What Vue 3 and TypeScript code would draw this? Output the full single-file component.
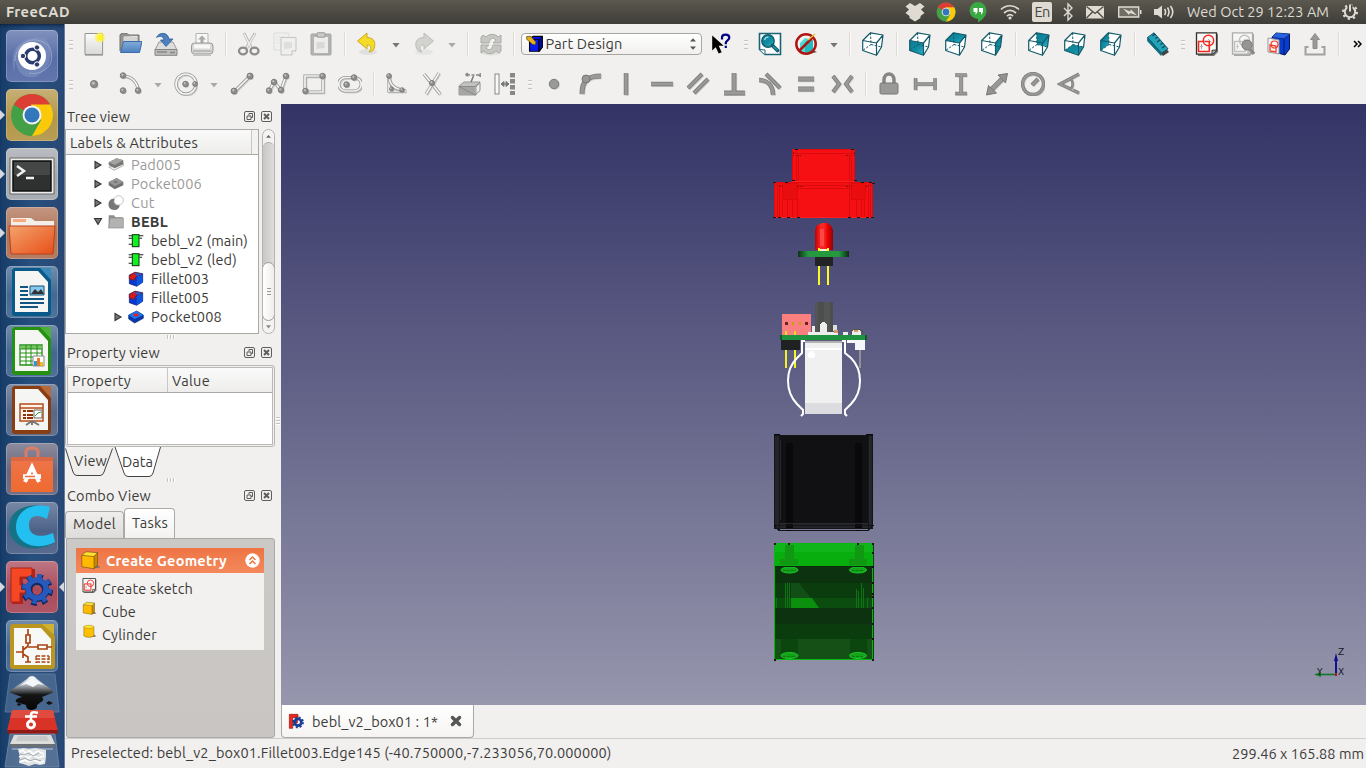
<script setup lang="ts">
interface Item { kind: 'icon' | 'sep' | 'grip' | 'drop' | 'combo' | 'more'; name?: string; w: number; off?: boolean }
interface Row { label: string; icon: string; w: number; pad: number; arrow: '' | 'r' | 'd'; off?: boolean; bold?: boolean }

// Spreads the letters of a label over its given width.
const vFit = {
  mounted(el: HTMLElement, binding: { value: number }) {
    const n = (el.textContent || '').trim().length
    const natural = el.getBoundingClientRect().width
    el.style.letterSpacing = ((binding.value - natural) / n).toFixed(3) + 'px'
  },
}

const ball = (x: number, y: number, r = 2.8) =>
  `<circle cx="${x + 0.8}" cy="${y + 1}" r="${r}" fill="#b9b9b7"/><circle cx="${x}" cy="${y}" r="${r}" fill="#8d8d8b" stroke="#757573" stroke-width=".8"/><circle cx="${x - 0.7}" cy="${y - 0.8}" r="${r * 0.38}" fill="#c4c4c2"/>`
const tube = (d: string) =>
  `<path d="${d}" transform="translate(.8 1)" fill="none" stroke="#cfcfcd" stroke-width="3.2"/><path d="${d}" fill="none" stroke="#979795" stroke-width="3.2"/><path d="${d}" fill="none" stroke="#f4f4f3" stroke-width="1.7"/>`
const bar = (d: string, w = 4) =>
  `<path d="${d}" transform="translate(.7 .8)" fill="none" stroke="#c9c9c7" stroke-width="${w}"/><path d="${d}" fill="none" stroke="#7d7d7b" stroke-width="${w}"/><path d="${d}" fill="none" stroke="#999997" stroke-width="${w - 1.6}"/>`

const faces: Record<string, string> = {
  none: '',
  front: '1.7,8.5 15.5,11 15.5,23.3 1.7,18.5',
  top: '1.7,8.5 9.5,.8 22,3 15.5,11',
  right: '15.5,11 22,3 20.5,15 15.5,23.3',
  rear: '9.5,.8 22,3 20.5,15 10,12.5',
  bottom: '1.7,18.5 10,12.5 20.5,15 15.5,23.3',
  left: '1.7,8.5 9.5,.8 10,12.5 1.7,18.5',
}
const cube = (f: string) =>
  `<path d="M1.7 8.5L9.5.8 22 3l-1.5 12-5 8.3L1.7 18.5z" fill="#fff"/>` +
  (f === 'none' ? '' : `<polygon points="${faces[f]}" fill="url(#teal)"/>`) +
  `<path d="M1.7 8.5L9.5.8 22 3l-1.5 12-5 8.3L1.7 18.5zM1.7 8.5L15.5 11 22 3M15.5 11v12.3" fill="none" stroke="#155a68" stroke-width="1.2" stroke-linejoin="round"/><path d="M9.5.8L10 12.5 1.7 18.5M10 12.5l10.5 2.5" fill="none" stroke="#155a68" stroke-width="1" stroke-dasharray="2.4 1.4"/>`
const paper = (red: string, edge: string) =>
  `<path d="M3 2h20v18l-4 4H3z" fill="#777775"/><path d="M1.5.8h20v17.4l-4 4h-16z" fill="#fafafa" stroke="${edge}" stroke-width="1.3"/><path d="M21.5 18l-4.500.3v4" fill="#bbb" stroke="${edge}"/><path d="M3.5 9.5h10.8v10H3.5z" fill="none" stroke="${red}" stroke-width="1.6"/><circle cx="13.5" cy="8.5" r="5.2" fill="none" stroke="${red}" stroke-width="1.4"/><path d="M6.5 12v5M5.2 14.5h2.8M13 7l3.5 3.5M9.5 8.5v3" stroke="#aaa"/>`
const chrome = (c: number, r: number) => {
  const a = r * 0.866, h = r * 0.5
  return `<circle cx="${c}" cy="${c}" r="${r}" fill="#43a047"/><path d="M${c} ${c}L${c - a} ${c - h}A${r} ${r} 0 0 1 ${c + a} ${c - h}z" fill="#dc3e35"/><path d="M${c - r * 0.05} ${c - h}H${c + a}A${r} ${r} 0 0 1 ${c} ${c + r}L${c + r * 0.43} ${c + r * 0.25}z" fill="#fcc90a"/><circle cx="${c}" cy="${c}" r="${r * 0.45}" fill="#f4f4f4"/><circle cx="${c}" cy="${c}" r="${r * 0.36}" fill="#3378bd"/>`
}
const magn = '<circle cx="10" cy="9" r="6.2" fill="url(#teal)" stroke="#155a68" stroke-width="1.4"/><path d="M14.5 13.5l5 5" stroke="#155a68" stroke-width="3.8" stroke-linecap="round"/><path d="M15.2 14.2l4 4" stroke="#1b99b3" stroke-width="1.6"/><path d="M6.5 8c.5-2 2-3 4-3" stroke="#8ed7e5" fill="none" stroke-width="1.4"/>'
const yellowBox = '<path d="M14 21l9-1-3-3z" fill="#76716a"/><path d="M2 6l14 1.5v14L2 19z" fill="#ffb900"/><path d="M2 6l5-4 13 1-4 4.5z" fill="#ffe033"/><path d="M16 7.5L20 3v14l-4 4.5z" fill="#c58a00"/><path d="M2 6l5-4 13 1v14l-4 4.5L2 19zM2 6l14 1.5v14M16 7.5L20 3" fill="none" stroke="#6b5208" stroke-width=".7"/>'

const icons: Record<string, string> = {
  new: '<path d="M3 23.2h18" stroke="#aaa" stroke-width="1.3"/><path d="M3 1.5h17.6v21H3z" fill="url(#paperg)" stroke="#92928e"/><circle cx="18" cy="5.5" r="5" fill="#fff34a" opacity=".75"/><circle cx="18" cy="5.5" r="2.6" fill="#fff32a"/>',
  open: '<path d="M2 19V3l1-1.3h6L11 3h10v8" fill="#969693" stroke="#6f6f6c"/><path d="M5 4l15-.5v9H5z" fill="#eee" stroke="#888"/><path d="M6 6h13M6 8h13" stroke="#bbb"/><path d="M5.5 9.5H24L21.5 20.5H2.5z" fill="url(#blueg)" stroke="#3d6ca9"/>',
  save: '<path d="M5 10h14l4 8H1z" fill="#ddd" stroke="#999"/><path d="M1 17.5h22v5.8H1z" fill="#bcbcb9" stroke="#858582"/><path d="M3 20h10M16 20.5h5" stroke="#888" stroke-width="1.5"/><path d="M2.500 5.500C5 0 13.500-.5 15 7h4L12 14.500 6.500 8H10C9 4 6 3.500 2.500 5.500z" fill="#4d80bd" stroke="#2d5c9c" stroke-width=".8"/>',
  print: '<path d="M6 13V1.500h12V13" fill="#f7f7f6" stroke="#b3b3b1"/><path d="M12 3.500l4 4h-2.500V11h-3V7.500H8z" fill="#a9a9a6"/><rect x="1.500" y="11" width="21.500" height="11" rx="3" fill="#d8d8d5" stroke="#999996"/><path d="M4 14.500h16" stroke="#f8f8f8" stroke-width="4"/><path d="M3 19h18.500" stroke="#bababA" stroke-width="2"/><path d="M3 23.400h18" stroke="#bbb"/>',
  cut: '<path d="M7 1.200l7.500 15M18 1.200L9.500 16" stroke="#b9b9b7" stroke-width="3"/><path d="M7.200 2l7 14M17.800 2L10 15.500" stroke="#f0f0ef" stroke-width="1.400"/><ellipse cx="6" cy="19" rx="4" ry="3.300" fill="none" stroke="#8c8c89" stroke-width="2.300"/><ellipse cx="17.500" cy="19" rx="4" ry="3.300" fill="none" stroke="#8c8c89" stroke-width="2.300"/>',
  copy: '<path d="M1 1h15v17H1z" fill="#f0f0ef" stroke="#dededc"/><path d="M3 5h9M3 8h9M3 11h4" stroke="#e2e2e0"/><path d="M8 5.500h15V19l-4 4H8z" fill="#efefee" stroke="#c4c4c2"/><path d="M11 10h8v6l-8 1z" fill="#dededc"/><path d="M19 23v-4h4" fill="#fff" stroke="#bbb"/>',
  paste: '<rect x="2" y="2" width="20" height="21" rx="1" fill="#b3b3b1" stroke="#a5a5a3"/><path d="M5 5h14v16H5z" fill="#ececeb"/><path d="M7.500 10h8v6l-8 1zM8 8h6" fill="#d8d8d6"/><rect x="8" y=".7" width="8" height="4.500" rx="1" fill="#c9c9c7" stroke="#9a9a97"/>',
  undo: '<ellipse cx="12" cy="20" rx="9" ry="3" fill="#dfdfdd"/><path d="M1.500 9L11 1v4.500C18.500 5.500 20 11 18 17c-1 2-3 3-5 3 3-3 2.500-7-2-7v4z" fill="#f5db28" stroke="#c9ac20" stroke-width="1"/>',
  redo: '<ellipse cx="12" cy="20" rx="9" ry="3" fill="#e5e5e3"/><path d="M21.500 9L12 1v4.500C4.500 5.500 2 11 5 17c1 2 3 3 5 3-3-3-2.500-7 2-7v4z" fill="#d2d2cf" stroke="#bbbbb8" stroke-width="1"/>',
  refresh: '<ellipse cx="12" cy="21" rx="10" ry="2.500" fill="#e0e0de"/><path d="M2 11V5l2-2 3 2c4-4 10-3 12 0l3-2v8h-8l3-3c-3-3-6-2-7 3zM22 13v6l-2 2-3-2c-4 4-10 3-12 0l-3 2v-8h8l-3 3c3 3 6 2 7-3z" fill="#c6c6c3" stroke="#ababa8"/>',
  help: '<path d="M3.200 3.500v15l3.500-3.300 3 6.300 3-1.300-3-6.500h5z" fill="#000"/><path d="M13 7.500V5.500c0-2 1.200-2.800 3.500-2.800s3.800 1 3.800 3-3.300 3.300-3.500 5v1.500M16.800 13.800v2.200" fill="none" stroke="#000087" stroke-width="2.200"/>',
  fit: `<path d="M1.500 1.500h21v21H7l-5.500-5z" fill="#fff" stroke="#1b6475" stroke-width="1.600"/>${magn}<path d="M1.500 17.500L7 18v4.500" fill="#fff" stroke="#1b6475"/>`,
  nodraw: '<path d="M12 23l11-3-4-2z" fill="#605849"/><circle cx="12" cy="12" r="9.700" fill="#eef3f2"/><path d="M6 11l5-5 8 2v11l-9 2-4-3z" fill="#4fdbd8"/><path d="M11 10l8-2v11l-8 2z" fill="#22babb"/><circle cx="12" cy="12" r="9.700" fill="none" stroke="#b11513" stroke-width="2.500"/><path d="M5 19L19 5" stroke="#b11513" stroke-width="2.500"/><path d="M14 8l7-6" stroke="#e4c238" stroke-width="1.400"/>',
  ruler: '<path d="M3 8l14 16 6-4-14-16z" fill="#434341"/><path d="M1.500 5.500L8 .800l14 16-6.500 4.500z" fill="#24a3b8" stroke="#135363"/><path d="M1.500 5.500v3.500l13.500 14.500.5-2.200z" fill="#087489" stroke="#135363" stroke-width=".6"/><path d="M9 2l-2.500 2M11.500 5l-2 1.500M14 8l-3 2M16.500 11l-2 1.500M19 14l-3 2" stroke="#0c4555" stroke-width="1.200"/>',
  sketch: paper('#f3291d', '#30302e'),
  viewsketch: `<g opacity=".6">${paper('#a4a4a2', '#80807e')}</g><circle cx="16" cy="13" r="5" fill="#959592" stroke="#777"/><path d="M19 17l4 5" stroke="#8a8a87" stroke-width="3.500"/>`,
  mapsketch: '<path d="M5 5l4-4 13.500 1v15L18 23 7 20z" fill="#083bd0" stroke="#071c56"/><path d="M5 5l12 1.500L22.500 2M17 6.500V23" stroke="#071c56" fill="none"/><path d="M5 5l4-4L22.500 2 17 6.500z" fill="#2862df"/><path d="M1 6l11 2v14L1 20z" fill="#f4f4f4" stroke="#999"/><path d="M3 13l6 1v6l-6-1z" fill="none" stroke="#f13b28" stroke-width="1.300"/><circle cx="7.500" cy="12.500" r="3.500" fill="none" stroke="#f13b28" stroke-width="1.200"/>',
  leave: '<path d="M5.500 15H2.500v7.500h19V15h-3" fill="none" stroke="#a0a09d" stroke-width="2"/><path d="M12 1.500l4.500 6H14v9h-4v-9H7.500z" fill="#999996" stroke="#8c8c89"/>',
  point: ball(12, 12, 3.6),
  arc: tube('M5 4C14 4 20 11 20 19') + ball(5, 3.5) + ball(20, 18.5) + ball(5, 18.5),
  circle: tube('M22 12A10 10 0 1 1 2 12A10 10 0 1 1 22 12') + ball(11.5, 12) + ball(21, 12, 2.4),
  line: tube('M4 20L20 4') + ball(4, 19, 3) + ball(20, 4, 3),
  polyline: tube('M3 19L8 10L15 18L20 4') + ball(3, 18.5) + ball(8, 10) + ball(15, 18) + ball(20, 4),
  rect: tube('M3 20V4H21V20Z') + ball(20.5, 4) + ball(3.5, 19),
  slot: tube('M7.500 5.500H16.500A6 6 0 0 1 16.500 19H7.500A6 6 0 0 1 7.500 5.500Z') + ball(8.5, 12.5) + ball(16, 5.5),
  fillet: tube('M4 3V19H21') + tube('M4 5C5 14 10 17 21 19') + ball(4, 4, 2.4) + ball(6.5, 17, 2) + ball(17, 18, 2.3),
  trim: tube('M3 2L19 22M18 1L5 22') + ball(11, 11, 2.6),
  extern: '<path d="M2 14l5-4h16l-4 5v8H2z" fill="#c2c2bf" stroke="#999"/><path d="M2 15h16v8H2z" fill="#a5a5a2"/><path d="M2 14.500h16l5-4v8l-5 4.500z" fill="none" stroke="#8a8a88"/><path d="M14 10l2.500-6" stroke="#777" stroke-width="1.500"/><path d="M10 3h13" stroke="#888" stroke-width="1.500" stroke-dasharray="3 1.500"/>' + ball(10, 2.5, 1.3) + ball(23.5, 3, 1.5),
  carbon: '<rect x="2" y="2" width="4" height="20" fill="#f9f9f9" stroke="#888"/><path d="M9.500 12h5M11 9.500v5l-3-2.500zM13 9.500v5l3-2.500z" stroke="#777" fill="#777"/><path d="M19.500 1v22" stroke="#888886" stroke-width="5" stroke-dasharray="4.500 1.500"/>',
  cpoint: '<circle cx="12.800" cy="12.800" r="5" fill="#c9c9c7"/><circle cx="12" cy="12" r="4.700" fill="#999997" stroke="#7b7b79"/>',
  carc: bar('M4 22C4 9 9 4 23 4', 5) + '<circle cx="8" cy="7" r="4" fill="#979795" stroke="#777775"/>',
  vert: bar('M12 1V23', 4.5), horiz: bar('M1 12H23', 4.5),
  para: bar('M2 16L16 2M8 21L22 7'), perp: bar('M12 1V21M2 21H23', 4.8),
  tangent: bar('M1 8C9 8 15 13 15 23', 4.500) + bar('M8 2L22 16'),
  equal: bar('M4 7H20M4 17H20', 5), sym: bar('M3 4L9 12L3 20M22 4L16 12L22 20', 4),
  lock: '<path d="M7 11V8c0-8 10-8 10 0v3" fill="none" stroke="#858583" stroke-width="3.500"/><rect x="3" y="11" width="18" height="11" rx="1.500" fill="#999997" stroke="#777775"/>',
  hdist: bar('M3 12H21M2.500 6V18M22 6V18', 3.5), vdist: bar('M12 3V21M6 3H18M6 21.500H18', 3.6),
  length: bar('M5 19L19 5', 5) + '<path d="M1.500 23l2-9.500 8 7.500zM22.500 1.500l-2 9.500-7.500-8z" fill="#929290" stroke="#777775"/>',
  radius: bar('M22.500 12A10.500 10.500 0 1 1 1.500 12A10.500 10.500 0 1 1 22.500 12', 3.4) + bar('M11 13L17 7', 4),
  angle: bar('M22 2L3 12L22 21', 3.2) + bar('M14 7C16 10 16 14 14 17', 2.5),
  pad: '<path d="M1 15l8 5 14-7v-3l-14 4z" fill="#eee" stroke="#999"/><path d="M1 8l12-6 10 3v6l-13 6-9-5z" fill="#777775"/><path d="M1 8l12-6 10 3-13 7z" fill="#a2a2a0"/>',
  pocketoff: '<path d="M1 9l12-6 10 6v5l-13 6-9-6z" fill="#717170"/><path d="M1 9l12-6 10 6-13 6z" fill="#969695"/><path d="M8 9l4-1.500 3 1.500-4 1.500z" fill="#6c6c6a"/>',
  cutobj: '<circle cx="16" cy="8" r="7" fill="#fff" stroke="#aaa"/><path d="M9 6a8 8 0 1 0 8 10A7 7 0 0 1 9 6z" fill="#777775" stroke="#666"/>',
  folder: '<path d="M1 21V2h8l2 3h11v16z" fill="#8d8d8b"/><path d="M3 6h20v15H1z" fill="#b2b2b0" stroke="#8b8b89"/>',
  chip: '<path d="M1 4h22M1 8h6M1 17h6M17 8h4" stroke="#222" stroke-width="1.600"/><rect x="6.500" y="2.500" width="10" height="18" fill="#0ef31f" stroke="#183b19" stroke-width="1.600"/>',
  filletobj: '<path d="M2 6l9-4 11 2v13l-9 6-11-4z" fill="#0838d0" stroke="#101d54"/><path d="M2 7l8-5 12 3-8 3c-3 0-4 4-4 6L2 12z" fill="#d81a1b" stroke="#79171a"/><path d="M13 9l9-4v12l-9 6z" fill="#0d54de"/><path d="M9 3l12 1-7 4z" fill="#1460dd"/>',
  pocket: '<path d="M1 9l12-6 10 6v5l-13 7-9-6z" fill="#0637ad" stroke="#122f69"/><path d="M1 9l12-6 10 6-13 6z" fill="#1577f5"/><path d="M7 9l5-3 5 3-5 3z" fill="#df231d"/>',
  box: yellowBox,
  cylinder: '<path d="M12 21l11-1-3-3z" fill="#76716a"/><path d="M3 4v15c3 3 13 3 16 0V4z" fill="#ffc000" stroke="#79600c" stroke-width=".8"/><ellipse cx="11" cy="4.500" rx="8" ry="2.500" fill="#ffe433" stroke="#a8860c" stroke-width=".8"/>',
  part: '<path d="M5 6l5-4h13v15l-4 6H5z" fill="#0719e9" stroke="#000" stroke-width="1.600"/><path d="M5 6h13v17M18 7l5-5v15l-5 6z" fill="#020ba0" stroke="#000"/><path d="M6 7h11v15H6z" fill="#0719f0"/><path d="M1 2h6l7 8-1 4-4-1L1 6z" fill="#e3b01d" stroke="#574004"/>',
  freecad: '<path d="M2 2h13v5H7v4h7v4H7v8H2z" fill="#ef271b" stroke="#881610"/><circle cx="15" cy="14" r="5" fill="none" stroke="#173f95" stroke-width="4"/><circle cx="15" cy="14" r="7.600" fill="none" stroke="#173f95" stroke-width="2.500" stroke-dasharray="3 2.970"/>',
  dropbox: '<path d="M7 3l5 3 5-3 4.500 3.500L18 9.500l3.500 3.500-4 3v2L12 21.500 6.500 18v-2l-4-3L6 9.500 2.500 6.500z" fill="#dfdbd2"/>',
  chrome: chrome(12, 9.5),
  hang: '<path d="M12 2a8.500 8.500 0 0 0 0 17v3.500c5-3 8.500-7 8.500-12A8.500 8.500 0 0 0 12 2z" fill="#39a944"/><path d="M7.500 8h4v4l-2 3v-3h-2zM13 8h4v4l-2 3v-3h-2z" fill="#fff"/>',
  wifi: '<path d="M3 9.500c5-5 13-5 18 0M6 13c4-3.500 8-3.500 12 0M9 16.200c2-2 4-2 6 0" fill="none" stroke="#dfdbd2" stroke-width="1.700"/><circle cx="12" cy="18" r="1.600" fill="#dfdbd2"/>',
  bt: '<path d="M8 8l8 8-4 4V4l4 4-8 8" fill="none" stroke="#dfdbd2" stroke-width="1.400"/>',
  mail: '<path d="M3 6h18v12.500H3z" fill="#dfdbd2"/><path d="M3.500 6.500l8.500 7 8.500-7M3.500 18l6-6M20.500 18l-6-6" fill="none" stroke="#4b4943" stroke-width="1.300"/>',
  batt: '<path d="M.700 7h20v10H.700z" fill="#706d65" stroke="#dfdbd2" stroke-width="1.400"/><path d="M22 10h1.500v4H22z" fill="#dfdbd2"/><path d="M5 8.500l7 3 1-2 6 6-7-2.500-1 2z" fill="#dfdbd2"/>',
  vol: '<path d="M2 9h3.500L10 5.500v13L5.500 15H2z" fill="#dfdbd2"/><path d="M12.500 9c1.500 2 1.500 4 0 6M15.500 7.500c2 3 2 6 0 9M18.500 6c3 4 3 8 0 12" fill="none" stroke="#dfdbd2" stroke-width="1.600"/>',
  gear: '<circle cx="12" cy="12" r="5.200" fill="none" stroke="#dfdbd2" stroke-width="2"/><circle cx="12" cy="12" r="7" fill="none" stroke="#dfdbd2" stroke-width="2" stroke-dasharray="2.300 3.200"/><path d="M12 4.500v7" stroke="#4b4943" stroke-width="5"/><path d="M12 4.500v7" stroke="#dfdbd2" stroke-width="2"/>',
}
for (const f of Object.keys(faces)) icons['cube-' + f] = cube(f)

const ic = (name: string, w = 36): Item => ({ kind: 'icon', name, w })
const sep: Item = { kind: 'sep', w: 11 }
const drop = (w: number, off = false): Item => ({ kind: 'drop', w, off })
const many = (s: string) => s.split(' ').map((n) => ic(n))

const bars: Item[][] = [
  [{ kind: 'grip', w: 11 }, ...many('new open save print'), sep, ...many('cut copy paste'), sep, ic('undo'), drop(20), ic('redo'), drop(20, true), sep, ic('refresh'), { kind: 'sep', w: 10 },
    { kind: 'combo', w: 184 }, ic('help'), { kind: 'grip', w: 13 }, ...many('fit nodraw'), drop(20), sep, ic('cube-none'), sep, ...many('cube-front cube-top cube-right'), sep,
    ...many('cube-rear cube-bottom cube-left'), sep, ic('ruler'), { kind: 'grip', w: 13 }, ...many('sketch viewsketch mapsketch leave'), sep, { kind: 'more', w: 26 }],
  [{ kind: 'grip', w: 11 }, ...many('point arc'), drop(20, true), ic('circle'), drop(20, true), ...many('line polyline rect slot'), sep, ...many('fillet trim extern carbon'), { kind: 'grip', w: 13 },
    ...many('cpoint carc vert horiz para perp tangent equal sym'), sep, ...many('lock hdist vdist length radius angle')],
]

const tree: Row[] = [
  { label: 'Pad005', icon: 'pad', w: 50, pad: 27, arrow: 'r', off: true },
  { label: 'Pocket006', icon: 'pocketoff', w: 71, pad: 27, arrow: 'r', off: true },
  { label: 'Cut', icon: 'cutobj', w: 24, pad: 27, arrow: 'r', off: true },
  { label: 'BEBL', icon: 'folder', w: 37, pad: 27, arrow: 'd', bold: true },
  { label: 'bebl_v2 (main)', icon: 'chip', w: 97, pad: 47, arrow: '' },
  { label: 'bebl_v2 (led)', icon: 'chip', w: 86, pad: 47, arrow: '' },
  { label: 'Fillet003', icon: 'filletobj', w: 58, pad: 47, arrow: '' },
  { label: 'Fillet005', icon: 'filletobj', w: 58, pad: 47, arrow: '' },
  { label: 'Pocket008', icon: 'pocket', w: 71, pad: 47, arrow: 'r' },
]
const tasks = [
  { label: 'Create sketch', icon: 'sketch', w: 91 },
  { label: 'Cube', icon: 'box', w: 34 },
  { label: 'Cylinder', icon: 'cylinder', w: 55 },
]
const tray = [['dropbox', 31], ['chrome', 32], ['hang', 31], ['wifi', 33], ['lang', 32], ['bt', 20], ['mail', 34], ['batt', 36], ['vol', 32]] as [string, number][]

const doc = (c: string, light: string, inner: string) =>
  `<path d="M8 2h27l10 11v34q0 3-3 3H9q-3 0-3-3V4z" fill="${c}"/><path d="M34 2h11v12z" fill="${light}"/><path d="M9 5h23l10 11v30H9z" fill="#f5f5f3"/>${inner}`
const launcher = [
  { id: 'dash', bg: '#5369a5', run: false, art: '<path d="M8 42C2 18 16 5 39 8C49 20 46 39 29 47C14 49 9 37 10 28" fill="#8193c0" opacity=".6"/><path d="M9 31C10 12 28 3 43 16C52 34 37 46 23 43" fill="none" stroke="#a9b5d5" opacity=".7"/><circle cx="26" cy="26" r="14" fill="#fff"/><circle cx="26.500" cy="26" r="6.800" fill="none" stroke="#2b3d6e" stroke-width="3.500"/><g fill="#2b3d6e" stroke="#fff" stroke-width="1"><circle cx="17" cy="26" r="2.700"/><circle cx="31" cy="17.500" r="2.700"/><circle cx="31" cy="34.500" r="2.700"/></g>' },
  { id: 'chrome', bg: '#b29345', run: true, art: chrome(26, 21) },
  { id: 'terminal', bg: '#a0a5ac', run: true, art: '<path d="M4 10h44v36H4z" fill="#ececeb" stroke="#666"/><path d="M7 13h38v30H7z" fill="#2f3030" stroke="#111" stroke-width="1.500"/><path d="M8 14h36v13H8z" fill="#454646"/><path d="M11 18l7 5-7 5M20 30h8" fill="none" stroke="#f0f0ef" stroke-width="2.500"/>' },
  { id: 'files', bg: '#ad6f52', run: true, art: '<path d="M5 11h20l4 3h19v12H5z" fill="#f4eee8"/><path d="M7 12h13v3H7z" fill="#f6ab83"/><path d="M3 19h46l-2 28H5z" fill="url(#folderg)" stroke="#b74320"/>' },
  { id: 'writer', bg: '#3b658f', run: false, art: doc('#09598b', '#3a88ba', '<path d="M14 21h8M14 25h8M14 29h8M14 33h24M14 37h24M14 41h18" stroke="#105680" stroke-width="2"/><path d="M24 20h14v9H24z" fill="#87c9ee" stroke="#164f75"/><path d="M25 28l4-5 3 3 3-3 3 5z" fill="#333"/>') },
  { id: 'calc', bg: '#3e628d', run: false, art: doc('#269012', '#4daf38', '<path d="M14 20h22v20H14z" fill="#fff" stroke="#229014" stroke-width="1.300"/><path d="M14 21h22v3H14z" fill="#77c467"/><path d="M14 24h22M14 28h22M14 32h22M14 36h22M20 20v20M25 20v20M31 20v20" stroke="#229014"/><path d="M27 31h11v10H27z" fill="#fff" stroke="#888"/><path d="M28 36h3v5h-3z" fill="#289adc"/><path d="M31 33h3v8h-3z" fill="#ef7522"/><path d="M34 37h3v4h-3z" fill="#e9bd20"/>') },
  { id: 'impress', bg: '#516384', run: false, art: doc('#883d12', '#b56a3c', '<path d="M14 20h23v17H14zM14 24h23" fill="#fff4ec" stroke="#b54c19" stroke-width="1.500"/><path d="M17 27h3M17 31h3M17 34h3M21 27h6M21 31h6M21 34h6" stroke="#8d330c" stroke-width="2"/><path d="M28 26h8v8h-8z" fill="#fff" stroke="#666"/><path d="M29 32l3-3 3-1" stroke="#299e32" fill="none"/><path d="M26 37l-6 4M26 37l7 4M26 37v4" stroke="#777" stroke-width="2"/>') },
  { id: 'software', bg: '#63627a', run: false, art: '<path d="M5 14h42v35H5z" fill="url(#orangeg)"/><path d="M20 18V9q0-4 6-4t6 4v9" fill="none" stroke="#d97e66" stroke-width="3"/><path d="M5 14h42v4H5z" fill="#cf613f" opacity=".6"/><path d="M19 39l7-15 7 15" fill="none" stroke="#fff" stroke-width="4"/><path d="M17 33.500h18" stroke="#fff" stroke-width="4.500"/><path d="M19 33.500h10" stroke="#ee6d3c" stroke-width="1.500"/>' },
  { id: 'cura', bg: '#465d84', run: false, art: '<path d="M43 6C24-1 3 7 3 25S25 53 46 42L44 34C26 39 19 36 18 24S30 10 39 16z" fill="#167286"/><path d="M44 5C25 0 10 9 10 25S29 50 49 40L47 31C32 37 23 33 23 23S31 12 41 17z" fill="#22bff0"/>' },
  { id: 'freecad', bg: '#a64556', run: true, art: '<path d="M6 8h23v10H17v7h10v9H17v9H6z" fill="#b72118"/><path d="M5 7h21v9H14v8h10v8H14v9H5z" fill="#f64724" stroke="#a4281b"/><circle cx="31" cy="29" r="8.500" fill="none" stroke="#0e2961" stroke-width="7"/><circle cx="31" cy="29" r="13.500" fill="none" stroke="#0e2961" stroke-width="5" stroke-dasharray="5.500 5.100"/><circle cx="31" cy="28" r="9" fill="none" stroke="#2659bb" stroke-width="5.500"/><circle cx="31" cy="28" r="13" fill="none" stroke="#2659bb" stroke-width="4" stroke-dasharray="4.500 5.710"/>' },
  { id: 'schematic', bg: '#3f628f', run: false, art: '<path d="M7 4h31l11 12v30q0 3-3 3H7q-3 0-3-3V7q0-3 3-3z" fill="#b8961f"/><path d="M36 4h12v11z" fill="#d1b131"/><path d="M8 8h27l10 11v26H8z" fill="#f8f8f6"/><path d="M22 9v17M22 27h24M10 32h7M17 26v12M22 26l-5 4M17 34l5 3v5M19 42h6" stroke="#a94412" stroke-width="1.700" fill="none"/><path d="M20 15h4v8h-4zM32 25h9v4h-9z" fill="#fff" stroke="#a94412" stroke-width="1.700"/><path d="M30 36h13M30 42h13M30 39h13M30 36v7M43 36v7" fill="none" stroke="#a94412" stroke-width="1.300" stroke-dasharray="4 1.500"/>' },
]
const blackDots = [[774, 183], [786, 183], [862, 183], [870, 183], [796, 150], [852, 150], [793, 181], [855, 181], [774, 218], [779, 218], [788, 218], [798, 218], [849, 218], [858, 218], [867, 218], [872, 218], [873, 184]]
const greenDots = [[775, 544], [789, 544], [858, 544], [873, 544], [873, 553], [873, 567], [873, 583], [873, 594], [873, 597], [873, 608], [873, 624], [873, 639], [873, 660], [775, 660]]
</script>

<template>
  <div class="desk">
    <svg class="defs" width="0" height="0">
      <defs>
        <linearGradient id="teal" x1="0" y1="0" x2="1" y2="1"><stop offset="0" stop-color="#087d93" /><stop offset=".55" stop-color="#128ca3" /><stop offset="1" stop-color="#2bb4ca" /></linearGradient>
        <linearGradient id="paperg" x2="0" y2="1"><stop stop-color="#fbfbfa" /><stop offset="1" stop-color="#d9d9d6" /></linearGradient>
        <linearGradient id="blueg" x2="0" y2="1"><stop stop-color="#84abd8" /><stop offset="1" stop-color="#4c80c0" /></linearGradient>
        <linearGradient id="folderg" x2="1" y2="1"><stop stop-color="#f3a36c" /><stop offset="1" stop-color="#e84e18" /></linearGradient>
        <linearGradient id="orangeg" x2="0" y2="1"><stop stop-color="#ed754b" /><stop offset="1" stop-color="#ef6a2f" /></linearGradient>
        <linearGradient id="inkg" x2="0" y2="1"><stop stop-color="#fff" /><stop offset=".3" stop-color="#9aa0a6" /><stop offset=".55" stop-color="#151515" /><stop offset="1" stop-color="#050505" /></linearGradient>
        <linearGradient id="ledg"><stop stop-color="#b90505" /><stop offset=".3" stop-color="#ff2020" /><stop offset=".5" stop-color="#f62a2a" /><stop offset=".7" stop-color="#ef0000" /><stop offset="1" stop-color="#8d0505" /></linearGradient>
        <linearGradient id="pcbg"><stop stop-color="#0b3117" /><stop offset=".2" stop-color="#26993f" /><stop offset=".8" stop-color="#26993f" /><stop offset="1" stop-color="#0c2b16" /></linearGradient>
      </defs>
    </svg>
    <header class="panel">
      <span class="app"><b v-fit="64">FreeCAD</b></span>
      <div class="tray">
        <span v-for="[n, w] in tray" :key="n" class="slot" :style="{ width: w + 'px' }">
          <span v-if="n === 'lang'" class="lang"><span v-fit="15">En</span></span>
          <svg v-else width="24" height="24" viewBox="0 0 24 24" v-html="icons[n]" />
        </span>
        <span class="clock"><span v-fit="142">Wed Oct 29 12:23 AM</span></span>
        <svg width="24" height="24" viewBox="0 0 24 24" v-html="icons.gear" />
      </div>
    </header>
    <div class="body">
      <nav class="launcher">
        <div v-for="l in launcher" :key="l.id" class="cell">
          <i v-if="l.run" class="run" />
          <svg class="tile" :style="{ backgroundColor: l.bg }" width="52" height="52" viewBox="0 0 52 52" v-html="l.art" />
          <i v-if="l.id === 'freecad'" class="focus" />
        </div>
        <svg class="stack" width="65" height="96" viewBox="0 0 65 96">
          <path d="M10 2h45l4 38H5z" fill="#6681a4" opacity=".5" stroke="#91a5bd" />
          <path d="M32 4q3 0 5 3l15 11q2 2 0 3l-10 4q3 3-1 5l-4 3q1 4-5 5-6 0-6-5l-10-3q-2-3 6-5l-11-4q-2-1 0-3L27 7q2-3 5-3z" fill="url(#inkg)" /><path d="M32 5l12 8-6-1-5 3-7-3-6 2z" fill="#f4f7fa" />
          <path d="M49 29l4 2-4 2-3-2zM18 31l4 1-3 2-2-1z" fill="#111" />
          <path d="M12 38h41l5 21H7z" fill="#d83326" /><path d="M12 38h41l2 8H10z" fill="#ed7a70" opacity=".35" /><path d="M7 58h51l-1 4H8z" fill="#8f1914" />
          <path d="M38 41q-7-2-7 2v7M25 44.500h12" fill="none" stroke="#fff" stroke-width="2.500" /><circle cx="31" cy="52.500" r="3.500" fill="none" stroke="#fff" stroke-width="3" />
          <path d="M10 62h45l4 33H5z" fill="#6c84a4" opacity=".65" stroke="#94a5ba" /><path d="M14 63h37l4 9H10z" fill="#dcdcda" /><path d="M18 64h29l2 5H16z" fill="#c6c8c9" /><path d="M10 72h45v3H10z" fill="#6b6f74" />
          <path d="M12 77h41" stroke="#bcc6d1" /><path d="M18 77l6-1 5 1 6-1 6 1 5 1v7l-1 7-5 1-5-1-6 2-6-2-4-1 1-6z" fill="#dfe3e3" />
          <path d="M19 80l4-2 2 3 5-2 3 3 5-3 6 3M19 85l5-2 4 3 5-3 5 3 6-2M20 90l5-2 4 2 5-2 6 3 4-2" stroke="#fff" stroke-width="1.500" fill="none" /><path d="M20 82l4 1 4-2 5 3 6-3M20 88l5-2 5 3 5-2 6 2" stroke="#a2abb0" fill="none" />
        </svg>
      </nav>
      <div class="window">
        <div v-for="(bar, b) in bars" :key="b" class="toolbar">
          <div v-for="(it, i) in bar" :key="i" class="slot" :style="{ width: it.w + 'px' }">
            <svg v-if="it.kind === 'icon'" width="24" height="24" viewBox="0 0 24 24" v-html="icons[it.name!]" />
            <i v-else-if="it.kind === 'sep'" class="sep" />
            <i v-else-if="it.kind === 'grip'" class="grip" />
            <i v-else-if="it.kind === 'drop'" class="drop" :class="{ off: it.off }" />
            <div v-else-if="it.kind === 'combo'" class="combo">
              <svg width="17" height="17" viewBox="0 0 24 24" v-html="icons.part" /><span v-fit="77">Part Design</span>
              <svg class="spin" width="8" height="14" viewBox="0 0 8 14"><path d="M1 4.500L4 1.200 7 4.500zM1 9.500L4 12.800 7 9.500z" fill="#555" /></svg>
            </div>
            <svg v-else class="more" width="9" height="8" viewBox="0 0 9 8"><path d="M1 1l3 3-3 3M5 1l3 3-3 3" fill="none" stroke="#000" stroke-width="1.500" /></svg>
          </div>
        </div>
        <div class="work">
          <aside class="dock">
            <div class="title"><span v-fit="63">Tree view</span><svg width="28" height="12" viewBox="0 0 28 12"><g id="btns" fill="none" stroke="#5e5e5c"><rect x=".5" y=".5" width="10" height="10" rx="1.500" /><path d="M3 5h4v3.500H3zM5 4.500V2.500h3.500v4H7" /><rect x="17.500" y=".5" width="10" height="10" rx="1.500" /><path d="M20 3l5 5M25 3l-5 5" stroke-width="2" /></g></svg></div>
            <div class="treewrap">
              <div class="tree">
                <div class="thead"><span v-fit="128">Labels &amp; Attributes</span></div>
                <div v-for="r in tree" :key="r.label" class="row" :class="{ off: r.off, bold: r.bold }" :style="{ paddingLeft: r.pad + 'px' }">
                  <svg class="arr" width="10" height="10" viewBox="0 0 10 10"><path v-if="r.arrow === 'r'" d="M2 1.500L8 5 2 8.500z" fill="#777" stroke="#333" stroke-width="1.100" /><path v-if="r.arrow === 'd'" d="M1.500 1.500h7L5 7.500z" fill="#777" stroke="#333" stroke-width="1.100" /></svg>
                  <svg width="16" height="16" viewBox="0 0 24 24" v-html="icons[r.icon]" /><span v-fit="r.w">{{ r.label }}</span>
                </div>
              </div>
              <div class="scroll"><i class="su" /><i class="track" /><i class="thumb"><i class="lines" /></i><i class="sd" /></div>
            </div>
            <div class="split"><i /></div>
            <div class="title t2"><span v-fit="93">Property view</span><svg width="28" height="12" viewBox="0 0 28 12"><use href="#btns" /></svg></div>
            <div class="props"><div class="pbox"><div class="phead"><div><span v-fit="59">Property</span></div><div><span v-fit="38">Value</span></div></div></div></div>
            <div class="vtabs">
              <svg width="100" height="31" viewBox="0 0 100 31"><path d="M.5 1.500L8 25q1 3.500 4 3.500h23q3 0 4-3.500L47.500 1.500" fill="#f0efed" stroke="#444" /><path d="M50 0L59 26q1 3.500 4 3.500h21q3 0 4-3.500L95.500 0z" fill="#fff" /><path d="M50 0L59 26q1 3.500 4 3.500h21q3 0 4-3.500L95.500 0" fill="none" stroke="#444" /></svg>
              <div class="vlabels"><span v-fit="33">View</span><span v-fit="31">Data</span></div>
            </div>
            <div class="split s2"><i /></div>
            <div class="title t3"><span v-fit="84">Combo View</span><svg width="28" height="12" viewBox="0 0 28 12"><use href="#btns" /></svg></div>
            <div class="ctabs"><div class="ct"><span v-fit="43">Model</span></div><div class="ct on"><span v-fit="36">Tasks</span></div></div>
            <div class="combo-body">
              <div class="task">
                <div class="tasktop"><svg width="21" height="21" viewBox="0 0 24 24" v-html="icons.box" /><b v-fit="121">Create Geometry</b>
                  <svg class="fold" width="15" height="15" viewBox="0 0 15 15"><circle cx="7.500" cy="7.500" r="7.200" fill="#fff" /><path d="M4.500 7l3-3 3 3M4.500 11l3-3 3 3" fill="none" stroke="#ee7443" stroke-width="1.500" /></svg></div>
                <div v-for="t in tasks" :key="t.label" class="tk"><svg width="15" height="15" viewBox="0 0 24 24" v-html="icons[t.icon]" /><span v-fit="t.w">{{ t.label }}</span></div>
              </div>
            </div>
          </aside>
          <main class="mdi">
            <svg class="view" width="1085" height="601" viewBox="281 104 1085 601" shape-rendering="crispEdges">
              <g stroke="#e00a0c" fill="#f60f13">
                <rect x="792.500" y="149.500" width="62" height="33" /><rect x="774.500" y="182.500" width="98" height="35" />
                <path d="M796.500 150v32M851.500 150v32M793 153.500h62M798.500 155v27M849.500 155v27M775 185.500h98M777.500 183v35M779.500 183v35M782.500 186v32M797.500 183v35M849.500 183v35M864.500 183v35M868.500 183v35M870.500 183v35M787.500 200v18M792.500 200v18M856.500 200v18M861.500 200v18M798 188.500h53" fill="none" stroke="#d70c0e" />
                <path d="M782 183h15v16h-15zM851 183h14v16h-14z" fill="#ea0d10" /><path d="M774 217.500h99M792 181.500h63" stroke="#fe2020" />
              </g>
              <g fill="#161616"><rect v-for="([x, y], i) in blackDots" :key="i" :x="x - 1" :y="y - 1" width="3" height="1" /></g>
              <g fill="none" stroke="#8a1010" stroke-dasharray="2 1 1 1"><path d="M797 155.500h5M846 155.500h5M779 186.500h4M797 186.500h6M846 186.500h6M865 186.500h4M793.500 152v5M854.500 152v5" /></g>
              <path d="M815 250v-18q0-9 9-9t9 9v18z" fill="url(#ledg)" /><path d="M820 229h4v17h-4z" fill="#ff4747" /><path d="M820 249h8v2h-8z" fill="#f7f3d6" />
              <path d="M818 248h2v4h-2zM827 248h2v4h-2z" fill="#fffb24" /><rect x="798" y="251" width="51" height="6" fill="url(#pcbg)" /><rect x="815" y="257" width="18" height="9" fill="#222324" /><path d="M819 266v19M828 266v19" stroke="#fbfb22" stroke-width="2" />

              <rect x="815" y="302" width="18" height="33" fill="#4b4e4d" /><path d="M815 302h3v33h-3zM824 302h6v33h-6z" fill="#525554" />
              <rect x="782" y="314" width="29" height="21" fill="#fa8080" /><path d="M785 322h3v3h-3zM805 322h3v3h-3z" fill="#701f20" /><path d="M792 322h2v3h-2zM799 322h2v3h-2z" fill="#c89e12" /><path d="M786 331v5M795 331v5" stroke="#eada21" stroke-width="2" />
              <path d="M808 332h30v3h-30zM812 326h3v8h-3zM820 335v-11q3-4 7 0v11zM843 332h5v3h-5zM852 335v-4q5-4 9 0v4z" fill="#eceeed" /><path d="M833 325h4v6h-4z" fill="#ddd" /><path d="M834 330h4v3h-4zM854 329h4v3h-4z" fill="#d59a66" /><path d="M851.500 334v-3l3-2h5l3 3v2" fill="none" stroke="#55504c" />
              <rect x="780" y="335" width="87" height="5" fill="#1f9340" /><path d="M780 335h2v5h-2zM865 335h2v5h-2z" fill="#0f5a28" />
              <rect x="781" y="340" width="19" height="10" fill="#202123" /><path d="M786 350v18M795 350v18" stroke="#f5f421" stroke-width="2" /><path d="M847 340h8v3h-8zM855 340h10v10h-10z" fill="#f5f7fb" /><path d="M860 350v18" stroke="#929194" stroke-width="2" />
              <g fill="none" stroke="#fff" stroke-width="2" shape-rendering="auto"><path d="M805 341h-3v12l-5 5c-12 12-12 33 0 46l6 6v4l-2 2M842 341h3v12l6 5c12 12 12 33 0 46l-6 6v4l2 2" /></g>
              <path d="M805 342h37v72h-37z" fill="#f0f0f1" /><path d="M805 341h37v2h-37z" fill="#b1b1b0" /><path d="M805 349h37" stroke="#fff" stroke-width="2" /><path d="M805 403h37v11h-37z" fill="#dddde1" /><circle cx="811.500" cy="354.500" r="3.500" fill="#fff" />

              <rect x="774" y="435" width="99" height="94" fill="#23232a" /><rect x="780" y="436" width="88" height="87" fill="#111113" /><path d="M786 443h7v85h-7zM855 443h7v85h-7z" fill="#09090a" />
              <path d="M774.500 435v91l4 4h90l4-4v-91zM774 525.500h99M779.500 435v95M868.500 435v95M774 528.500h99" fill="none" stroke="#151517" /><path d="M780 523.500h88M869.500 440v83M780.500 440v80" stroke="#282930" />
              <path d="M774 434.500h6M866 434.500h7M787 530.500h4M856 530.500h4M774 525.500h2M872 525.500h2" stroke="#080808" />

              <rect x="774.500" y="543.500" width="99" height="116" fill="#103d15" /><rect x="775" y="544" width="98" height="22" fill="#08ad0e" /><rect x="775" y="544" width="98" height="8" fill="#10b51a" />
              <path d="M785 545h9v14h-9zM855 545h9v14h-9zM780 559h18v6h-18zM849 559h18v6h-18z" fill="#119812" /><path d="M775 566h98v17h-98zM775 608h98v30h-98z" fill="#0c320f" /><path d="M775 583h98v15h-98z" fill="#0b3c0e" /><path d="M775 598h98v10h-98z" fill="#0b4c0f" />
              <g shape-rendering="auto"><path d="M791 583h8l12 15h-20z" fill="#124f17" /><path d="M791 598h21l7 10h-28z" fill="#0b900e" /></g>
              <path d="M775 639h98v20h-98z" fill="#155017" /><path d="M781 639h17v16h-17zM850 639h17v16h-17z" fill="#0c460f" /><path d="M775 624h98v15h-98z" fill="#0b3c0e" />
              <path d="M785.500 583v25M787.500 583v25M789.500 583v25M856.500 589v19M858.500 591v17M861.500 583v25M863.500 588v20M867.500 598v10M776.500 598v10" stroke="#117116" />
              <g fill="#14a41b" stroke="#1ec627" shape-rendering="auto"><ellipse cx="789.500" cy="570" rx="8.500" ry="3" /><ellipse cx="858" cy="570" rx="8.500" ry="3" /><ellipse cx="789.500" cy="655.500" rx="8.500" ry="3" /><ellipse cx="858" cy="655.500" rx="8.500" ry="3" /></g>
              <path d="M783 570.500h13M852 570.500h12M783 656.500h13M852 656.500h12" stroke="#0b7d12" stroke-dasharray="3 1" />
              <rect x="774.500" y="543.500" width="98" height="116" fill="none" stroke="#08b70e" /><path d="M775 566.500h98" stroke="#0b2b0e" />
              <g fill="#111"><rect v-for="([x, y], i) in greenDots" :key="i" :x="x - 1" :y="y - 1" width="2" height="2" /></g>
              <g shape-rendering="auto"><path d="M1336 673v-15" stroke="#11118d" stroke-width="2" /><path d="M1336 653l-2 8h4z" fill="#0e0e91" /><path d="M1336 674.500h-17" stroke="#147828" stroke-width="1.600" /><path d="M1314 674.500l7-2.500v5z" fill="#147828" /><path d="M1335 673h2v3h-2z" fill="#a32020" /></g>
              <g class="axis"><text x="1338" y="655">Z</text><text x="1317" y="675">Y</text><text x="1338" y="675">X</text></g>
            </svg>
            <div class="filetabs"><div class="file"><svg width="16" height="16" viewBox="0 0 24 24" v-html="icons.freecad" /><span v-fit="126">bebl_v2_box01 : 1*</span><svg class="close" width="12" height="12" viewBox="0 0 12 12"><path d="M2.500 2.500l7 7M9.500 2.500l-7 7" stroke="#565654" stroke-width="3.500" stroke-linecap="round" /></svg></div></div>
            <i class="vgrip" />
          </main>
        </div>
        <footer class="status"><span v-fit="540.5">Preselected: bebl_v2_box01.Fillet003.Edge145 (-40.750000,-7.233056,70.000000)</span><span v-fit="132">299.46 x 165.88 mm</span></footer>
      </div>
    </div>
  </div>
</template>

<style>
body { margin: 0; overflow: hidden; }
</style>
<style scoped>
* { box-sizing: border-box; }
svg { flex: none; display: block; }
.defs { position: absolute; }
.desk { width: 1366px; height: 768px; display: flex; flex-direction: column; overflow: hidden; background: #f1f0ee; color: #3c3b3a; font: 14.5px/19px Ubuntu, "Noto Sans", "Open Sans", sans-serif; }
.desk span, .desk b { white-space: nowrap; }
.panel { height: 24px; flex: none; display: flex; justify-content: space-between; background: linear-gradient(#5b584f, #3e3d38); color: #dfdbd2; line-height: 24px; }
.app { padding-left: 6px; }
.tray { display: flex; width: 467px; }
.slot { display: flex; flex: none; align-items: center; justify-content: center; }
.lang { width: 20px; height: 20px; border-radius: 2px; background: #dfdbd2; color: #454440; display: flex; align-items: center; justify-content: center; line-height: 20px; }
.clock { width: 158px; padding-left: 7px; }
.body { flex: 1; display: flex; min-height: 0; }
.launcher { width: 65px; flex: none; padding-top: 6px; background: linear-gradient(90deg, #173c68, #27507f 50%, #294875); border-right: 1px solid #68809d; box-shadow: inset 0 4px 4px -3px #081b38; }
.cell { height: 59px; display: flex; align-items: flex-start; padding-left: 6px; position: relative; }
.tile { border-radius: 5px; background-image: linear-gradient(#ffffff45, #ffffff08 55%, #ffffff18); box-shadow: inset 0 0 0 1px #ffffff35; }
.run { position: absolute; left: 0; top: 21px; border: 5px solid transparent; border-left-color: #d5d9df; border-right: 0; }
.focus { position: absolute; right: 0; top: 21px; border: 5px solid transparent; border-right-color: #d5d9df; border-left: 0; }
.stack { margin-top: -7px; }
.window { flex: 1; display: flex; flex-direction: column; min-width: 0; }
.toolbar { height: 40px; flex: none; display: flex; }
.sep { width: 2px; height: 24px; background: #dcdbd8; border-right: 1px solid #fafaf9; }
.grip { width: 4px; height: 9px; background: repeating-linear-gradient(#c5c4c1 0 1px, #fafafa 1px 2px, transparent 2px 4px); }
.drop { width: 8px; height: 5px; background: #757573; clip-path: polygon(0 0, 100% 0, 50% 100%); margin-top: 2px; }
.drop.off { background: #aaa9a7; }
.combo { width: 181px; height: 22px; display: flex; align-items: center; gap: 3px; padding: 0 4px; border: 1px solid #a8a7a4; border-radius: 4px; background: linear-gradient(#fff, #f1f0ee); }
.combo > svg:first-child { margin-top: -1px; }
.combo span { margin-top: -2px; }
.spin { margin-left: auto; }
.work { flex: 1; display: flex; min-height: 0; }
.dock { width: 216px; flex: none; display: flex; flex-direction: column; }
.title { flex: none; display: flex; justify-content: space-between; align-items: center; padding: 0 9px 0 2px; height: 25px; }
.title.t2 span, .title.t3 span { margin-top: -2px; }
.treewrap { display: flex; height: 205px; flex: none; gap: 3px; }
.tree { width: 194px; border: 1px solid #aaa9a6; background: #fff; overflow: hidden; }
.thead { height: 25px; padding: 3px 0 0 4px; background: linear-gradient(90deg, transparent 185px, #c8c7c4 185px 186px, #f3f2f0 186px), linear-gradient(#fafafa, #eeedeb); border-bottom: 1px solid #a9a8a5; }
.row { height: 19px; display: flex; align-items: center; color: #3c3b3a; }
.row.off { color: #9b9a98; }
.row.bold { font-weight: 700; }
.row span { margin-left: 7px; }
.arr { margin-right: 5px; }
.scroll { width: 13px; display: flex; flex-direction: column; align-items: center; border: 1px solid #b4b3b0; border-radius: 7px; background: #f4f3f1; overflow: hidden; }
.su { height: 12px; flex: none; display: flex; width: 5px; background: #666; clip-path: polygon(0 65%, 100% 65%, 50% 42%); }
.sd { height: 12px; flex: none; width: 5px; background: #888; clip-path: polygon(0 35%, 100% 35%, 50% 63%); }
.track { flex: 1; width: 100%; background: linear-gradient(90deg, #c9c7c4, #dedddb); border-top: 1px solid #aaa9a6; border-radius: 6px 6px 0 0; }
.thumb { height: 59px; width: 13px; flex: none; border: 1px solid #9c9b98; border-radius: 7px; background: linear-gradient(90deg, #fff, #eeedeb); display: flex; align-items: center; justify-content: center; margin-top: -2px; }
.lines { width: 4px; height: 7px; background: repeating-linear-gradient(#999 0 1px, transparent 1px 3px); }
.split { height: 7px; flex: none; display: flex; justify-content: center; padding-top: 1px; padding-right: 4px; }
.split i { width: 8px; height: 4px; background: repeating-linear-gradient(90deg, #c5c4c1 0 1px, #fff 1px 2px, transparent 2px 3px); }
.t2 { height: 24px; }
.props { width: 210px; height: 82px; flex: none; border: 1px solid #b9b8b5; border-radius: 3px; padding: 1px; background: #f1f0ee; }
.pbox { height: 100%; border: 1px solid #b9b8b5; background: #fff; }
.phead { display: flex; height: 25px; background: linear-gradient(#fafafa, #eeedeb); border-bottom: 1px solid #a9a8a5; }
.phead > div { padding: 3px 0 0 4px; width: 100px; border-right: 1px solid #c8c7c4; }
.phead > div:last-child { width: 104px; border: 0; padding-left: 4px; }
.vtabs { height: 31px; flex: none; display: grid; }
.vtabs > * { grid-area: 1 / 1; }
.vlabels { display: flex; padding: 4px 0 0 9px; gap: 15px; }
.vlabels span:last-child { padding-top: 1px; }
.s2 { height: 6px; padding-top: 0; }
.t3 { height: 24px; }
.ctabs { display: flex; align-items: flex-end; height: 30px; flex: none; }
.ct { height: 27px; width: 59px; display: flex; align-items: center; padding: 0 0 3px 7px; border: 1px solid #aaa9a6; border-bottom: 0; border-radius: 4px 4px 0 0; background: linear-gradient(#efeeec, #dddcda); }
.ct.on { height: 30px; width: 51px; padding-bottom: 2px; background: linear-gradient(#fff, #f3f2f0); }
.combo-body { flex: 1; width: 209px; margin-left: 1px; border: 1px solid #a9a8a5; border-radius: 0 3px 3px 3px; background: linear-gradient(#cbc9c6, #c8c5c3); padding: 9px 10px 9px 9px; }
.task { height: 102px; background: #f2f1ef; }
.tasktop { height: 25px; margin-bottom: 4px; display: flex; align-items: center; padding: 0 4px; gap: 5px; color: #fff; background: linear-gradient(#ee7443, #f4895c); }
.fold { margin-left: auto; }
.tk { height: 23px; display: flex; padding: 2px 6px 0; gap: 5px; }
.tk svg { margin-top: -1px; }
.mdi { flex: 1; position: relative; display: flex; flex-direction: column; min-width: 0; }
.view { background: linear-gradient(#333366, #9696ad); }
.axis { font: 9px "DejaVu Sans", sans-serif; fill: #17171b; }
.filetabs { height: 33px; flex: none; }
.file { width: 193px; height: 33px; display: flex; align-items: center; padding-left: 6px; background: linear-gradient(#fff, #f5f4f2); border: 1px solid #aaa9a6; border-top: 0; border-radius: 0 0 4px 4px; }
.file span { margin-left: 8px; }
.close { margin-left: 12px; }
.vgrip { position: absolute; left: -5px; top: 313px; width: 4px; height: 8px; background: repeating-linear-gradient(#c5c4c1 0 1px, #fff 1px 2px, transparent 2px 3px); }
.status { height: 30px; flex: none; display: flex; justify-content: space-between; align-items: center; padding: 0 2px 2px 6px; border-top: 1px solid #cecdca; }
.status span:last-child { margin-top: 2px; }
</style>
